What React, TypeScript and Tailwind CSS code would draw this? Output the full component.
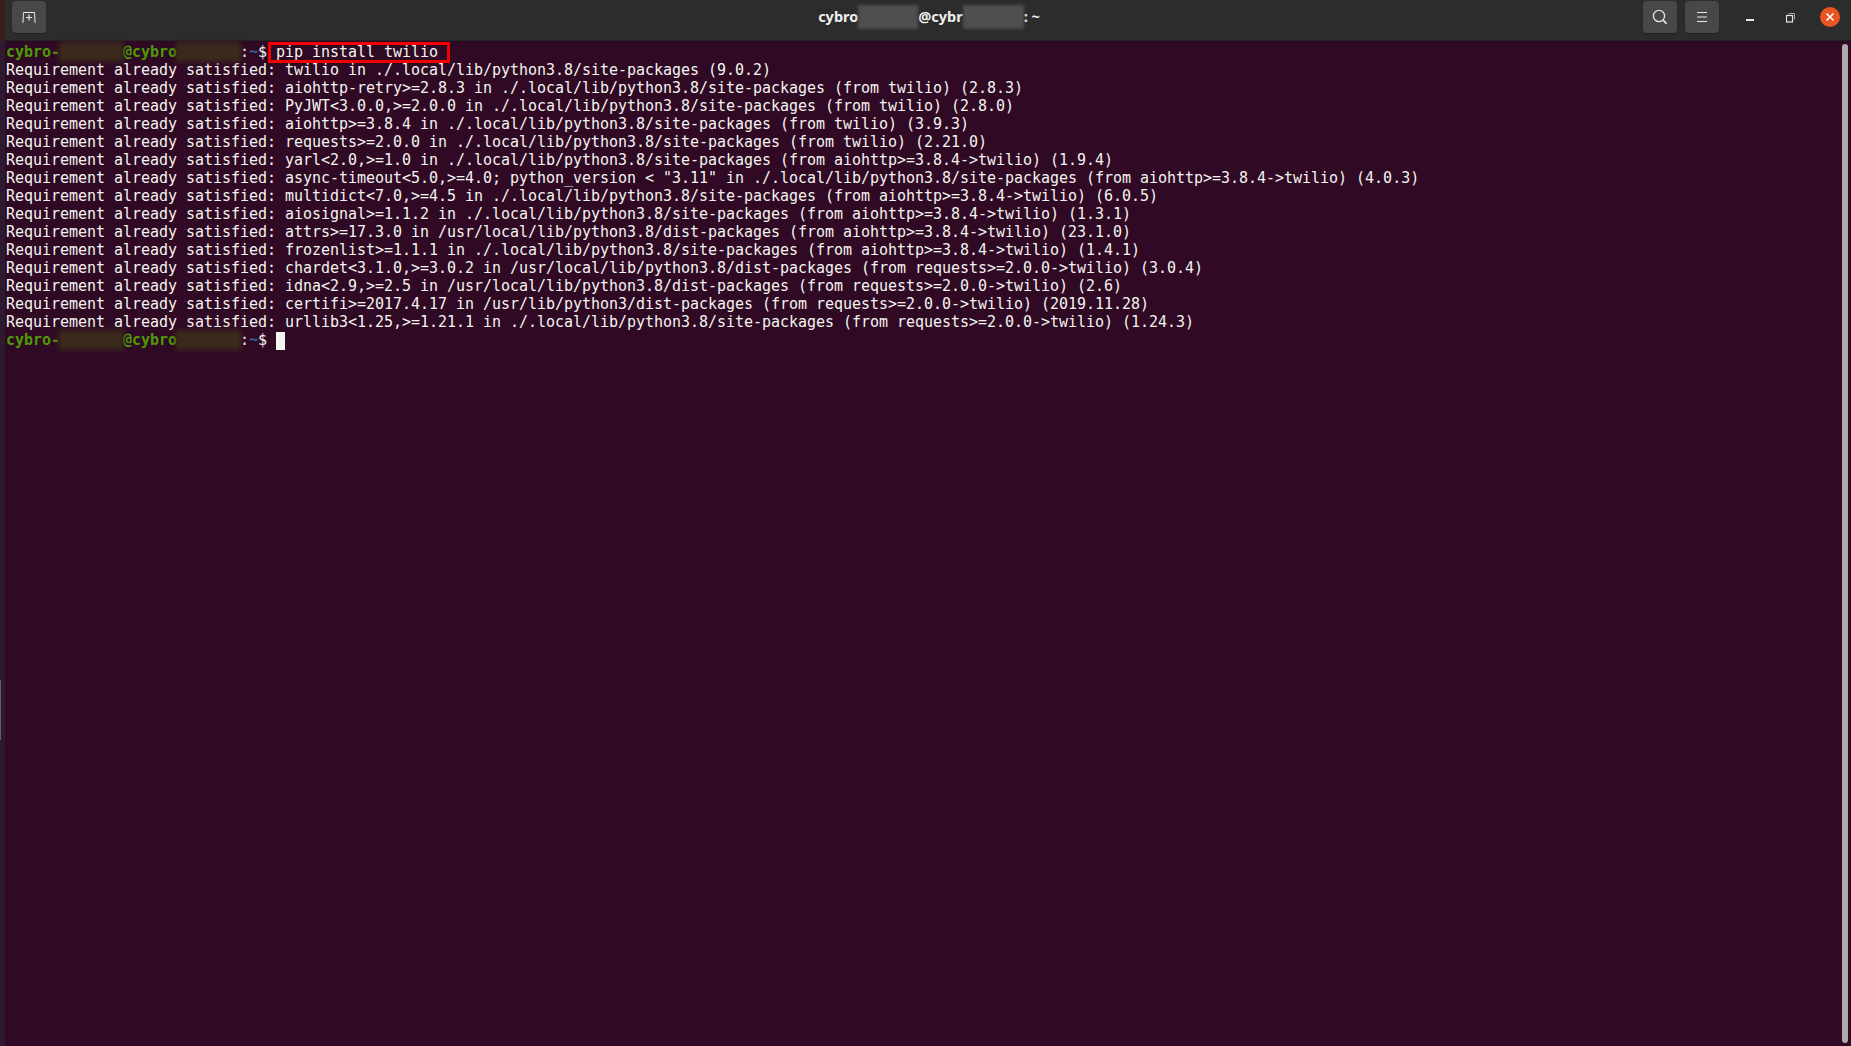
const mono = "font-['DejaVu_Sans_Mono','Liberation_Mono',monospace] tracking-[-0.03px]"

const lines = [
  'twilio in ./.local/lib/python3.8/site-packages (9.0.2)',
  'aiohttp-retry>=2.8.3 in ./.local/lib/python3.8/site-packages (from twilio) (2.8.3)',
  'PyJWT<3.0.0,>=2.0.0 in ./.local/lib/python3.8/site-packages (from twilio) (2.8.0)',
  'aiohttp>=3.8.4 in ./.local/lib/python3.8/site-packages (from twilio) (3.9.3)',
  'requests>=2.0.0 in ./.local/lib/python3.8/site-packages (from twilio) (2.21.0)',
  'yarl<2.0,>=1.0 in ./.local/lib/python3.8/site-packages (from aiohttp>=3.8.4->twilio) (1.9.4)',
  'async-timeout<5.0,>=4.0; python_version < "3.11" in ./.local/lib/python3.8/site-packages (from aiohttp>=3.8.4->twilio) (4.0.3)',
  'multidict<7.0,>=4.5 in ./.local/lib/python3.8/site-packages (from aiohttp>=3.8.4->twilio) (6.0.5)',
  'aiosignal>=1.1.2 in ./.local/lib/python3.8/site-packages (from aiohttp>=3.8.4->twilio) (1.3.1)',
  'attrs>=17.3.0 in /usr/local/lib/python3.8/dist-packages (from aiohttp>=3.8.4->twilio) (23.1.0)',
  'frozenlist>=1.1.1 in ./.local/lib/python3.8/site-packages (from aiohttp>=3.8.4->twilio) (1.4.1)',
  'chardet<3.1.0,>=3.0.2 in /usr/local/lib/python3.8/dist-packages (from requests>=2.0.0->twilio) (3.0.4)',
  'idna<2.9,>=2.5 in /usr/local/lib/python3.8/dist-packages (from requests>=2.0.0->twilio) (2.6)',
  'certifi>=2017.4.17 in /usr/lib/python3/dist-packages (from requests>=2.0.0->twilio) (2019.11.28)',
  'urllib3<1.25,>=1.21.1 in ./.local/lib/python3.8/site-packages (from requests>=2.0.0->twilio) (1.24.3)',
]

function Smudge({ className }: { className: string }) {
  return (
    <span className={`relative inline-block h-[18px] align-top ${className}`}>
      <span className="absolute -inset-x-[1px] -top-[1px] -bottom-[1px] bg-[#3a2b1c] blur-[2.5px]" />
    </span>
  )
}

function Prompt() {
  return (
    <>
      <span className="font-bold text-[#4e9a06]">cybro-</span>
      <Smudge className="w-[63px]" />
      <span className="font-bold text-[#4e9a06]">@cybro</span>
      <Smudge className="w-[63px]" />
      <span>:</span>
      <span className="font-bold text-[#3465a4]">~</span>
      <span>$ </span>
    </>
  )
}

function TitleButton({ children }: { children: React.ReactNode }) {
  return (
    <button className="flex h-[32px] w-[34px] items-center justify-center rounded-[4px] bg-[#484848] shadow-[0_1px_1px_rgba(0,0,0,0.3)]">
      {children}
    </button>
  )
}

function TitleBar() {
  return (
    <div className="flex h-[41px] shrink-0 items-start border-b border-[#232323] bg-[#2c2c2c]">
      <div className="flex flex-1 pl-[7px] pt-[1px]">
        <TitleButton>
          <svg width="14" height="11" viewBox="0 0 14 11" fill="none" stroke="#e8e8e8" strokeWidth="1">
            <path d="M0.5 10.5 H1 L1.5 0.5 H12.5 L13 10.5 H13.5" />
            <path d="M7 2.5 V8.5 M4 5.5 H10" strokeWidth="1.2" />
          </svg>
        </TitleButton>
      </div>
      <div className="flex h-[33px] items-center pr-[5px] font-['Noto_Sans','Open_Sans',sans-serif] text-[14.5px] font-bold text-[#f0f0f0]">
        <span>cybro</span>
        <span className="h-[24px] w-[60px] bg-[#4f4f4f] blur-[1.5px]" />
        <span>@cybr</span>
        <span className="h-[24px] w-[61px] bg-[#4f4f4f] blur-[1.5px]" />
        <span>: ~</span>
      </div>
      <div className="flex flex-1 items-start justify-end pt-[1px]">
        <TitleButton>
          <svg width="16" height="16" viewBox="0 0 16 16" fill="none" stroke="#dedede" strokeWidth="1.4">
            <circle cx="7" cy="7" r="5.6" />
            <path d="M11.2 11.2 L14.6 14.8" strokeWidth="1.8" />
          </svg>
        </TitleButton>
        <div className="ml-[8px]">
          <TitleButton>
            <svg width="12" height="12" viewBox="0 0 12 12" fill="none" stroke="#e8e8e8" strokeWidth="1">
              <path d="M1 1.5 H11 M1 6 H11 M1 10.5 H11" />
            </svg>
          </TitleButton>
        </div>
        <div className="ml-[27px] mt-[18px] h-[1.5px] w-[8px] bg-[#e8e8e8]" />
        <svg className="ml-[32px] mt-[12px]" width="9" height="10" viewBox="0 0 9 10" fill="none" stroke="#e8e8e8" strokeWidth="1">
          <rect x="0.5" y="2.5" width="6" height="6.5" strokeWidth="1.2" />
          <path d="M2.5 0.5 H8.5 V6.5" stroke="#a8a8a8" />
        </svg>
        <div className="ml-[25px] mr-[11px] mt-[6px] flex h-[20px] w-[20px] items-center justify-center rounded-full bg-[#e95420]">
          <svg width="10" height="10" viewBox="0 0 10 10" stroke="#ffffff" strokeWidth="1.6">
            <path d="M1.5 1.5 L8.5 8.5 M8.5 1.5 L1.5 8.5" />
          </svg>
        </div>
      </div>
    </div>
  )
}

export default function App() {
  return (
    <div className="flex h-screen w-full overflow-hidden bg-[#300a24]">
      <div className="flex w-[5px] shrink-0 flex-col bg-[#2d1a2e]">
        <div className="h-[41px] bg-[#3a1c1e]" />
        <div className="mt-[639px] h-[60px] w-[1px] bg-[#6a5a6c]" />
      </div>
      <div className="flex min-w-0 flex-1 flex-col">
        <TitleBar />
        <div className="flex min-h-0 flex-1">
          <div className={`min-w-0 flex-1 whitespace-pre pl-[1px] pt-[2px] text-[15px] leading-[18px] text-[#f4f4f0] ${mono}`}>
            <div className="h-[18px]">
              <Prompt />
              <span className="relative">
                pip install twilio
                <span className="absolute -left-[8px] -right-[12px] -top-[1px] -bottom-[2px] border-[3px] border-[#f00000]" />
              </span>
            </div>
            {lines.map((line) => (
              <div key={line} className="h-[18px]">
                Requirement already satisfied: {line}
              </div>
            ))}
            <div className="flex h-[18px]">
              <Prompt />
              <span className="mt-[1px] h-[18px] w-[9px] bg-[#f4f4f0]" />
            </div>
          </div>
          <div className="w-[12px] shrink-0 pl-[3px] pt-[3px] pb-[3px] pr-[1px]">
            <div className="h-full w-[6px] rounded-full bg-[#aeaaac]" />
          </div>
        </div>
      </div>
    </div>
  )
}
